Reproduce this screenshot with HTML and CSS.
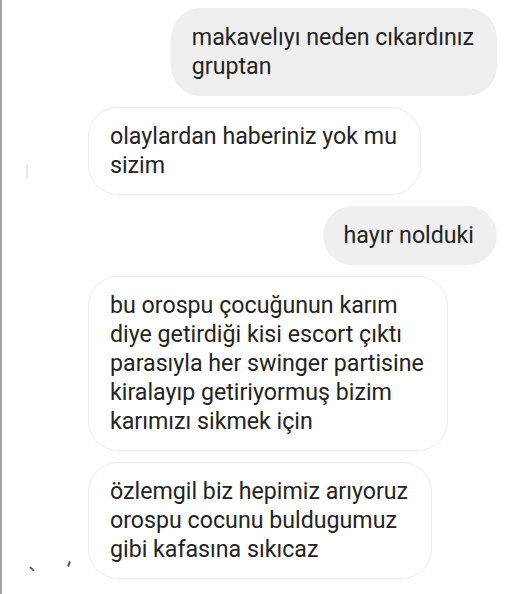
FILE: index.html
```html
<!DOCTYPE html>
<html>
<head>
<meta charset="utf-8">
<link rel="stylesheet" href="styles.css">
</head>
<body>
<div class="screen">
  <div class="thread">
    <div class="msg sent">makavelıyı neden cıkardınız<br>gruptan</div>
    <div class="msg recv">olaylardan haberiniz yok mu<br>sizim</div>
    <div class="msg sent">hayır nolduki</div>
    <div class="msg recv">bu orospu çocuğunun karım<br>diye getirdiği kisi escort çıktı<br>parasıyla her swinger partisine<br>kiralayıp getiriyormuş bizim<br>karımızı sikmek için</div>
    <div class="msg recv">özlemgil biz hepimiz arıyoruz<br>orospu cocunu buldugumuz<br>gibi kafasına sıkıcaz</div>
  </div>
  <span class="mark mark-a"></span>
  <span class="mark mark-b"></span>
  <span class="mark mark-c"></span>
</div>
</body>
</html>
```

FILE: styles.css
```css
html, body {
  margin: 0;
  padding: 0;
  background: #ffffff;
}
.screen {
  position: relative;
  width: 516px;
  height: 594px;
  box-sizing: border-box;
  border-left: 2px solid #a3a3a3;
  overflow: hidden;
  font-family: Roboto, "Noto Sans", sans-serif;
  color: #232323;
}
.thread {
  display: flex;
  flex-direction: column;
  gap: 11px;
  padding: 8px 19px 0 86px;
}
.msg {
  width: fit-content;
  box-sizing: border-box;
  padding: 15px 23px 15px 21px;
  border-radius: 30px;
  font-size: 23.2px;
  line-height: 29px;
  white-space: nowrap;
}
.sent {
  align-self: flex-end;
  background: #efefef;
}
.recv {
  align-self: flex-start;
  background: #ffffff;
  border: 1px solid #ececec;
  padding: 14px 23px 14px 21px;
}
.mark {
  position: absolute;
  width: 2px;
  height: 6px;
  background: #555;
  border-radius: 1px;
}
.mark-a {
  left: 29px;
  top: 566px;
  transform: rotate(-45deg);
}
.mark-b {
  left: 66px;
  top: 561px;
  transform: rotate(20deg);
}
.mark-c {
  left: 24px;
  top: 164px;
  width: 2px;
  height: 14px;
  background: #e6e6e6;
}
```
